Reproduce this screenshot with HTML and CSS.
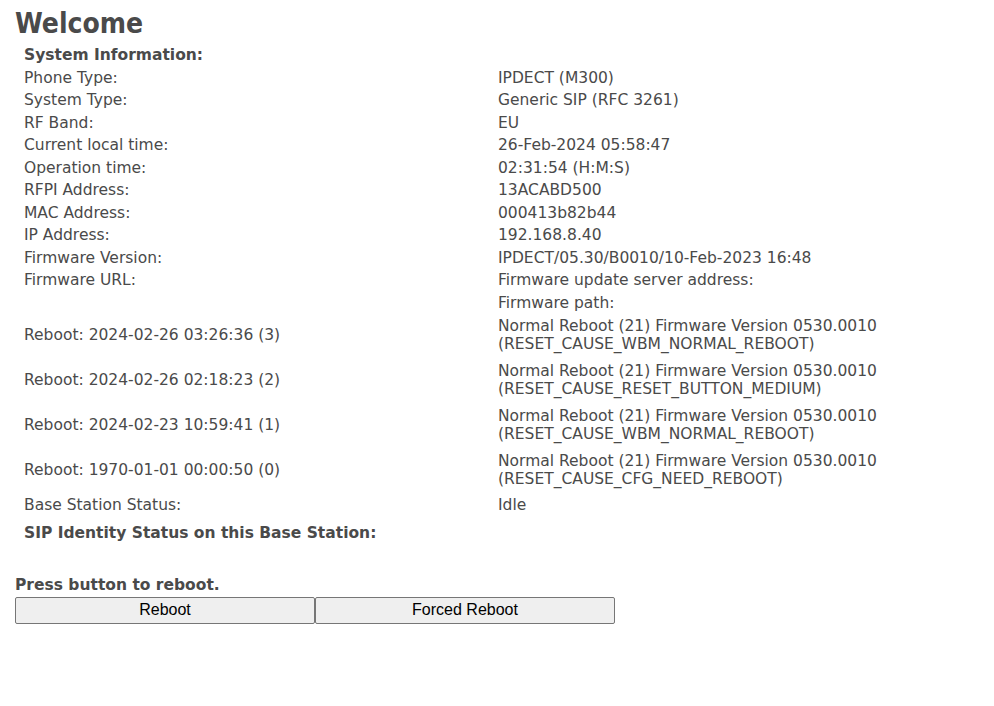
FILE: index.html
```html
<!DOCTYPE html>
<html lang="en">
<head>
  <meta charset="UTF-8">
  <title>Welcome</title>
  <link rel="stylesheet" href="styles.css">
</head>
<body>
  <h1 class="page-title">Welcome</h1>

  <table class="info">
    <tr class="head"><td colspan="2">System Information:</td></tr>
    <tr><td class="label">Phone Type:</td><td>IPDECT (M300)</td></tr>
    <tr><td class="label">System Type:</td><td>Generic SIP (RFC 3261)</td></tr>
    <tr><td class="label">RF Band:</td><td>EU</td></tr>
    <tr><td class="label">Current local time:</td><td>26-Feb-2024 05:58:47</td></tr>
    <tr><td class="label">Operation time:</td><td>02:31:54 (H:M:S)</td></tr>
    <tr><td class="label">RFPI Address:</td><td>13ACABD500</td></tr>
    <tr><td class="label">MAC Address:</td><td>000413b82b44</td></tr>
    <tr><td class="label">IP Address:</td><td>192.168.8.40</td></tr>
    <tr><td class="label">Firmware Version:</td><td>IPDECT/05.30/B0010/10-Feb-2023 16:48</td></tr>
    <tr><td class="label">Firmware URL:</td><td>Firmware update server address:</td></tr>
    <tr><td class="label"></td><td>Firmware path:</td></tr>
    <tr class="reboot"><td class="label">Reboot: 2024-02-26 03:26:36 (3)</td><td>Normal Reboot (21) Firmware Version 0530.0010<br>(RESET_CAUSE_WBM_NORMAL_REBOOT)</td></tr>
    <tr class="reboot"><td class="label">Reboot: 2024-02-26 02:18:23 (2)</td><td>Normal Reboot (21) Firmware Version 0530.0010<br>(RESET_CAUSE_RESET_BUTTON_MEDIUM)</td></tr>
    <tr class="reboot"><td class="label">Reboot: 2024-02-23 10:59:41 (1)</td><td>Normal Reboot (21) Firmware Version 0530.0010<br>(RESET_CAUSE_WBM_NORMAL_REBOOT)</td></tr>
    <tr class="reboot"><td class="label">Reboot: 1970-01-01 00:00:50 (0)</td><td>Normal Reboot (21) Firmware Version 0530.0010<br>(RESET_CAUSE_CFG_NEED_REBOOT)</td></tr>
    <tr><td class="label">Base Station Status:</td><td>Idle</td></tr>
    <tr class="head sip"><td colspan="2">SIP Identity Status on this Base Station:</td></tr>
  </table>

  <div class="reboot-box">
    <div class="reboot-title">Press button to reboot.</div>
    <div class="buttons">
      <button class="btn">Reboot</button>
      <button class="btn">Forced Reboot</button>
    </div>
  </div>
</body>
</html>
```

FILE: styles.css
```css
body {
  margin: 0;
  padding: 0 15px;
  font-family: Tahoma, "DejaVu Sans", sans-serif;
  font-size: 15.5px;
  color: #4a4a4a;
  background: #fff;
}

.page-title {
  font-family: Tahoma, "DejaVu Sans Condensed", "DejaVu Sans", sans-serif;
  font-size: 28px;
  font-weight: bold;
  margin: 7px 0 3px 0;
  line-height: 34px;
}

.info {
  border-collapse: collapse;
  margin-left: 6px;
  line-height: 18px;
}

.info td {
  padding: 2.25px 3px;
  vertical-align: middle;
  white-space: nowrap;
}

.info td.label {
  width: 468px;
}

.info .reboot td {
  padding: 2.75px 3px 6.25px 3px;
}

.head td {
  font-weight: bold;
}

.sip td {
  padding-top: 7px;
}

.reboot-box {
  margin-top: 32px;
}

.reboot-title {
  font-weight: bold;
  line-height: 18px;
  margin-bottom: 3px;
}

.buttons {
  display: flex;
}

.btn {
  width: 300px;
  height: 27px;
  font-family: "Liberation Sans", Arial, sans-serif;
  font-size: 16px;
  color: #000;
  background: #efefef;
  border: 1px solid #767676;
  border-radius: 2px;
  padding: 0;
}
```
